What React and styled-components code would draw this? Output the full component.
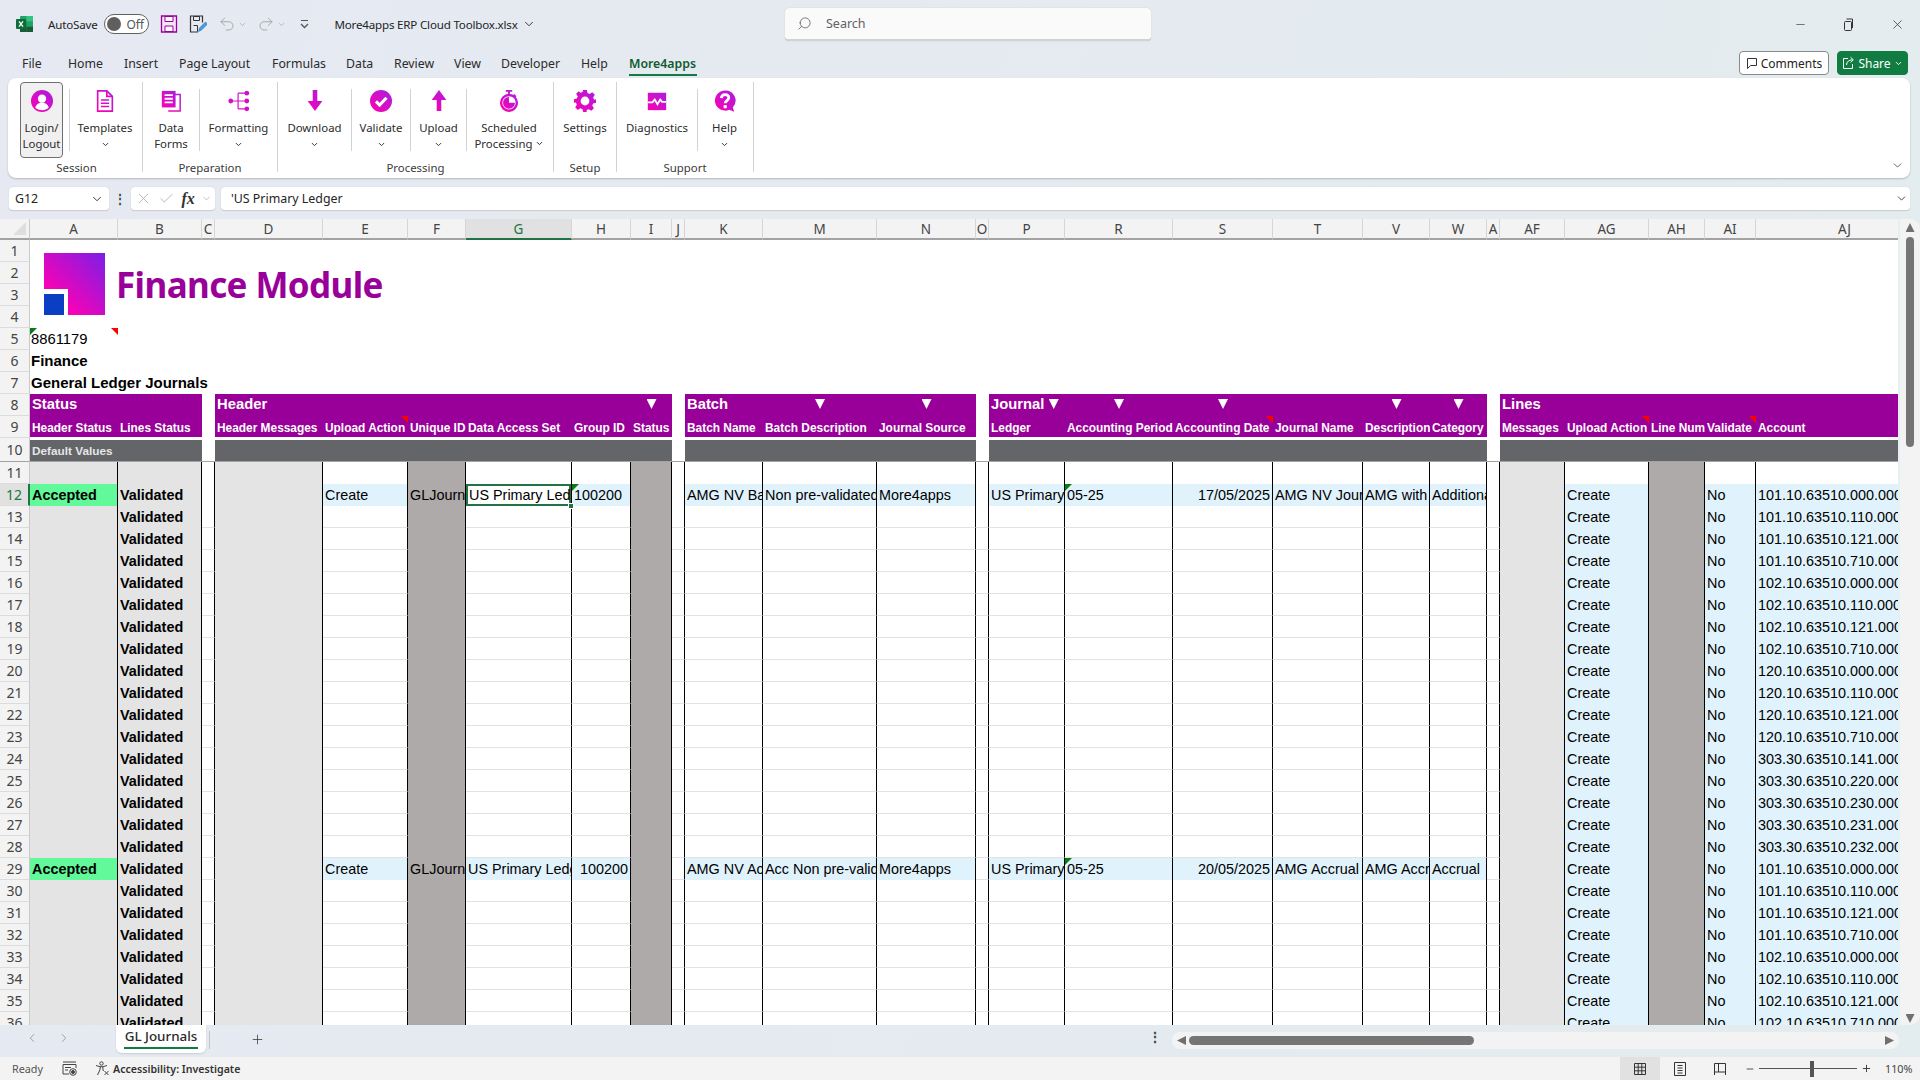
import React from "react";
import styled, { createGlobalStyle } from "styled-components";
import { ChevronDown, ChevronLeft, ChevronRight, Minus, Plus, Search, Undo2, Redo2, X, Check } from "lucide-react";

const UI_FONT = '"Noto Sans", "Open Sans", sans-serif';
const SHEET_FONT = '"Liberation Sans", Arial, sans-serif';

const columns = [
  { name: "A", w: 88, fill: "grey" },
  { name: "B", w: 84, fill: "grey" },
  { name: "C", w: 13, gap: true },
  { name: "D", w: 108, fill: "grey" },
  { name: "E", w: 85 },
  { name: "F", w: 58, fill: "dark" },
  { name: "G", w: 106 },
  { name: "H", w: 59 },
  { name: "I", w: 41, fill: "dark" },
  { name: "J", w: 13, gap: true },
  { name: "K", w: 78 },
  { name: "M", w: 114 },
  { name: "N", w: 99 },
  { name: "O", w: 13, gap: true },
  { name: "P", w: 76 },
  { name: "R", w: 108 },
  { name: "S", w: 100 },
  { name: "T", w: 90 },
  { name: "V", w: 67 },
  { name: "W", w: 57 },
  { name: "AE", label: "A", w: 13, gap: true },
  { name: "AF", w: 65, fill: "grey" },
  { name: "AG", w: 84, lines: true },
  { name: "AH", w: 56, fill: "dark" },
  { name: "AI", w: 51, lines: true },
  { name: "AJ", w: 178, lines: true },
];

const groupTitles = { A: "Status", D: "Header", K: "Batch", P: "Journal", AF: "Lines" };
const filterColumns = ["I", "M", "N", "P", "R", "S", "V", "W"];
const subHeads = {
  A: "Header Status",
  B: "Lines Status",
  D: "Header Messages",
  E: "Upload Action",
  F: "Unique ID",
  G: "Data Access Set",
  H: "Group ID",
  I: "Status",
  K: "Batch Name",
  M: "Batch Description",
  N: "Journal Source",
  P: "Ledger",
  R: "Accounting Period",
  S: "Accounting Date",
  T: "Journal Name",
  V: "Description",
  W: "Category",
  AF: "Messages",
  AG: "Upload Action",
  AH: "Line Num",
  AI: "Validate",
  AJ: "Account",
};
const redMarks = ["E", "S", "AG", "AI"];

const journalRows = {
  12: {
    A: "Accepted",
    E: "Create",
    F: "GLJournal",
    G: "US Primary Ledger",
    H: "100200",
    K: "AMG NV Batch",
    M: "Non pre-validated",
    N: "More4apps",
    P: "US Primary Ledger",
    R: "05-25",
    S: "17/05/2025",
    T: "AMG NV Journal",
    V: "AMG with",
    W: "Additional",
  },
  29: {
    A: "Accepted",
    E: "Create",
    F: "GLJournal",
    G: "US Primary Ledger",
    H: "100200",
    K: "AMG NV Accrual",
    M: "Acc Non pre-validated",
    N: "More4apps",
    P: "US Primary Ledger",
    R: "05-25",
    S: "20/05/2025",
    T: "AMG Accrual",
    V: "AMG Accrual",
    W: "Accrual",
  },
};

const accounts = [
  "101.10.63510.000", "101.10.63510.110", "101.10.63510.121", "101.10.63510.710",
  "102.10.63510.000", "102.10.63510.110", "102.10.63510.121", "102.10.63510.710",
  "120.10.63510.000", "120.10.63510.110", "120.10.63510.121", "120.10.63510.710",
  "303.30.63510.141", "303.30.63510.220", "303.30.63510.230", "303.30.63510.231", "303.30.63510.232",
  "101.10.63510.000", "101.10.63510.110", "101.10.63510.121", "101.10.63510.710",
  "102.10.63510.000", "102.10.63510.110", "102.10.63510.121", "102.10.63510.710",
];

const menuTabs = [
  ["File", 46], ["Home", 56], ["Insert", 55], ["Page Layout", 93], ["Formulas", 74], ["Data", 48],
  ["Review", 60], ["View", 47], ["Developer", 80], ["Help", 48], ["More4apps", 68],
];

const GlobalStyle = createGlobalStyle`
  html, body {
    margin: 0;
    width: 1920px;
    height: 1080px;
    overflow: hidden;
    font-family: ${UI_FONT};
    color: #242424;
  }
  * { box-sizing: border-box; }
`;

const Page = styled.div`
  width: 1920px;
  height: 1080px;
  display: flex;
  flex-direction: column;
  background: linear-gradient(100deg, #e6e9f2 0%, #e3ecef 100%);
`;

const TitleBar = styled.div`
  height: 48px;
  display: flex;
  align-items: center;
  padding-left: 16px;
  flex: none;
`;

const AutoSaveLabel = styled.span`
  margin-left: 14px;
  font-size: 11.6px;
  letter-spacing: -0.2px;
`;

const Toggle = styled.div`
  margin-left: 7px;
  width: 45px;
  height: 20px;
  border: 1px solid #616161;
  border-radius: 10px;
  background: #fff;
  display: flex;
  align-items: center;
  gap: 5px;
  padding-left: 2px;
  font-size: 12px;
  color: #555;
  &::before {
    content: "";
    width: 14px;
    height: 14px;
    border-radius: 50%;
    background: #5f5f5f;
  }
`;

const QuickIcon = styled.span`
  margin-left: ${(p) => p.$gap}px;
  display: flex;
  color: ${(p) => p.$color || "#a7a7a7"};
`;

const FileName = styled.span`
  margin-left: 24px;
  font-size: 11.6px;
  letter-spacing: -0.2px;
  display: flex;
  align-items: center;
  gap: 4px;
  white-space: nowrap;
`;

const SearchBox = styled.div`
  position: absolute;
  left: 785px;
  top: 8px;
  width: 366px;
  height: 33px;
  background: #fafafa;
  border-radius: 4px;
  border-bottom: 2px solid #d3d3d3;
  box-shadow: 0 0 1px rgba(0, 0, 0, 0.25);
  display: flex;
  align-items: center;
  gap: 14px;
  padding-left: 12px;
  font-size: 12.5px;
  color: #616161;
`;

const WindowControls = styled.div`
  margin-left: auto;
  display: flex;
  align-items: center;
  padding-right: 15px;
  gap: 36px;
  color: #333;
`;

const MenuRow = styled.div`
  height: 30px;
  display: flex;
  align-items: center;
  padding-left: 22px;
  padding-right: 12px;
  flex: none;
`;

const MenuTab = styled.div`
  width: ${(p) => p.$w}px;
  height: 26px;
  flex: none;
  line-height: 28px;
  font-size: 12.3px;
  white-space: nowrap;
  font-weight: ${(p) => (p.$active ? 600 : 400)};
  color: ${(p) => (p.$active ? "#0f5c31" : "#2b2b2b")};
  position: relative;
  &::after {
    content: "";
    display: ${(p) => (p.$active ? "block" : "none")};
    position: absolute;
    left: 0;
    right: 0;
    bottom: 0;
    height: 2px;
    background: #107c41;
  }
`;

const MenuActions = styled.div`
  margin-left: auto;
  display: flex;
  gap: 8px;
`;

const CommentsButton = styled.div`
  width: 90px;
  height: 24px;
  display: flex;
  align-items: center;
  justify-content: center;
  gap: 3px;
  background: #fff;
  border: 1px solid #8a8a8a;
  border-radius: 4px;
  font-size: 12px;
`;

const ShareButton = styled(CommentsButton)`
  width: 71px;
  background: #107c41;
  border-color: #107c41;
  color: #fff;
`;

const Ribbon = styled.div`
  flex: none;
  margin: 0 10px 0 8px;
  height: 100px;
  background: #fff;
  border-radius: 8px;
  box-shadow: 0 1px 2px rgba(0, 0, 0, 0.22);
  display: flex;
  padding-top: 4px;
`;

const RibbonGroup = styled.div`
  width: ${(p) => p.$w}px;
  height: 90px;
  padding-left: ${(p) => p.$pad || 0}px;
  border-right: 1px solid #d2d2d2;
  display: flex;
  flex-direction: column;
  flex: none;
`;

const GroupButtons = styled.div`
  height: 76px;
  display: flex;
  flex: none;
`;

const GroupLabel = styled.div`
  height: 20px;
  line-height: 20px;
  margin-left: ${(p) => (p.$pad ? -p.$pad : 0)}px;
  text-align: center;
  font-size: 11.4px;
  color: #3a3a3a;
`;

const RibbonButton = styled.div`
  width: ${(p) => p.$w}px;
  height: 76px;
  flex: none;
  display: flex;
  flex-direction: column;
  align-items: center;
  padding-top: ${(p) => (p.$active ? 6 : 7)}px;
  font-size: 11.4px;
  line-height: 16px;
  text-align: center;
  color: #2b2b2b;
  white-space: nowrap;
  border: ${(p) => (p.$active ? "1px solid #6f6f6f" : "none")};
  border-radius: 4px;
  background: ${(p) => (p.$active ? "#f0f0f0" : "transparent")};
`;

const ButtonIcon = styled.span`
  width: 24px;
  height: 24px;
  display: flex;
  align-items: center;
  justify-content: center;
  margin-bottom: 7px;
  flex: none;
`;

const ButtonSep = styled.span`
  width: 1px;
  height: 62px;
  margin: 7px 0 0 ${(p) => p.$gap || 0}px;
  background: #d2d2d2;
  flex: none;
`;

const DropMark = styled(ChevronDown)`
  width: 9px;
  height: 9px;
  stroke-width: 2.5;
  display: ${(p) => (p.$inline ? "inline" : "block")};
  margin: ${(p) => (p.$inline ? "0 0 0 2px" : "4px auto 0")};
`;

const RibbonCollapse = styled.span`
  margin: auto 6px 6px auto;
  display: flex;
  color: #444;
`;

const FormulaBar = styled.div`
  flex: none;
  margin: 9px 10px 8px 9px;
  height: 24px;
  display: flex;
  align-items: center;
  font-size: 12.4px;
`;

const NameBox = styled.div`
  width: 100px;
  height: 24px;
  background: #fff;
  border-radius: 4px;
  border-bottom: 1px solid #cfcfcf;
  box-shadow: 0 0 1px rgba(0, 0, 0, 0.2);
  display: flex;
  align-items: center;
  justify-content: space-between;
  padding: 0 5px 0 6px;
`;

const BarDots = styled.span`
  width: 22px;
  text-align: center;
  font-weight: 700;
  line-height: 1;
  color: #444;
`;

const FxBox = styled(NameBox)`
  width: 84px;
  padding: 0 3px 0 4px;
  color: #a8a8a8;
`;

const FxMark = styled.span`
  font-family: "Liberation Serif", serif;
  font-style: italic;
  font-weight: 700;
  font-size: 16px;
  color: #333;
`;

const FormulaInput = styled(NameBox)`
  flex: 1;
  margin-left: 6px;
  padding: 0 2px 0 10px;
`;

const SheetArea = styled.div`
  flex: 1;
  min-height: 0;
  display: flex;
`;

const GridViewport = styled.div`
  width: 1898px;
  height: 806px;
  overflow: hidden;
  background: #fff;
`;

const SheetGrid = styled.div`
  display: grid;
  grid-template-columns: 30px ${columns.map((c) => `${c.w}px`).join(" ")};
  grid-template-rows: 21px repeat(9, 22px) 24px repeat(26, 22px);
  font-family: ${SHEET_FONT};
  font-size: 14.4px;
  color: #000;
`;

const Corner = styled.div`
  background: #f3f3f3;
  border-right: 1px solid #c9c9c9;
  border-bottom: 2px solid #a3a3a3;
  position: relative;
  &::after {
    content: "";
    position: absolute;
    right: 3px;
    bottom: 3px;
    width: 13px;
    height: 13px;
    background: #dedede;
    clip-path: polygon(100% 0, 100% 100%, 0 100%);
  }
`;

const ColumnHead = styled.div`
  background: ${(p) => (p.$selected ? "#e1e1e1" : "#f3f3f3")};
  border-right: 1px solid #d6d6d6;
  border-bottom: 2px solid ${(p) => (p.$selected ? "#217346" : "#a3a3a3")};
  color: ${(p) => (p.$selected ? "#217346" : "#444")};
  font-family: ${UI_FONT};
  font-size: 13.5px;
  line-height: 21px;
  text-align: center;
  overflow: hidden;
`;

const RowHead = styled.div`
  background: ${(p) => (p.$selected ? "#e1e1e1" : "#f3f3f3")};
  border-right: ${(p) => (p.$selected ? "2px solid #217346" : "1px solid #c9c9c9")};
  border-bottom: ${(p) => (p.$freeze ? "1px solid #a3a3a3" : "1px solid #dcdcdc")};
  color: ${(p) => (p.$selected ? "#217346" : "#444")};
  font-family: ${UI_FONT};
  font-size: 14px;
  padding-bottom: 1px;
  display: flex;
  align-items: center;
  justify-content: center;
`;

const Banner = styled.div`
  grid-column: 2 / -1;
  grid-row: span 4;
  display: flex;
  align-items: center;
  padding-left: 14px;
  gap: 11px;
`;

const BannerTitle = styled.span`
  font-family: "Noto Sans", sans-serif;
  font-weight: 700;
  font-size: 35px;
  letter-spacing: -0.6px;
  color: #990099;
  white-space: nowrap;
`;

const MetaCell = styled.div`
  grid-column: ${(p) => (p.$wide ? "2 / -1" : "auto")};
  position: relative;
  display: flex;
  align-items: flex-end;
  padding: 0 2px 3px 1px;
  font-size: ${(p) => (p.$bold ? 15 : 14.8)}px;
  font-weight: ${(p) => (p.$bold ? 700 : 400)};
  white-space: nowrap;
`;

const MetaRest = styled.div`
  grid-column: 3 / -1;
`;

const GroupHead = styled.div`
  background: ${(p) => (p.$gap ? "#fff" : "#990099")};
  color: #fff;
  font-weight: 700;
  font-size: 14.8px;
  display: flex;
  align-items: center;
  padding: 0 2px 2px;
  white-space: nowrap;
`;

const FilterMark = styled.span`
  width: 10px;
  height: 10px;
  margin: 0 auto;
  background: #fff;
  clip-path: polygon(0 0, 100% 0, 50% 100%);
  flex: none;
`;

const SubHead = styled.div`
  position: relative;
  background: ${(p) => (p.$gap ? "#fff" : "#990099")};
  border-bottom: 1px solid #fff;
  color: #fff;
  font-weight: 700;
  font-size: 11.9px;
  display: flex;
  align-items: center;
  padding: 2px 2px 0;
  white-space: nowrap;
`;

const DefaultCell = styled.div`
  border-top: 2px solid #fff;
  border-bottom: 1px solid #a3a3a3;
  background: ${(p) => (p.$gap ? "#fff" : "#636569")};
  color: #e6e6e6;
  font-weight: 700;
  font-size: 11.8px;
  display: flex;
  align-items: center;
  padding: 0 2px;
  white-space: nowrap;
`;

const fills = {
  grey: "#e4e4e4",
  dark: "#aeaaaa",
  blue: "#e0f3fd",
  green: "#61f99a",
  white: "#fff",
};

const Cell = styled.div`
  position: relative;
  min-width: 0;
  background: ${(p) => fills[p.$fill]};
  border-right: 1px solid #000;
  border-bottom: ${(p) => (p.$ruled ? "1px solid #e2e2e2" : "none")};
  box-shadow: ${(p) => (p.$selected ? "inset 0 0 0 2px #217346" : "none")};
  z-index: ${(p) => (p.$selected ? 2 : "auto")};
`;

const CellText = styled.div`
  height: 100%;
  overflow: hidden;
  white-space: nowrap;
  padding: 2px 2px 0 ${(p) => (p.$selected ? 3 : 2)}px;
  line-height: 18px;
  font-weight: ${(p) => (p.$bold ? 700 : 400)};
  text-align: ${(p) => (p.$right ? "right" : "left")};
`;

const FillHandle = styled.span`
  position: absolute;
  right: -3px;
  bottom: -3px;
  width: 6px;
  height: 6px;
  background: #217346;
  border: 1px solid #fff;
`;

const CornerMark = styled.span`
  position: absolute;
  top: 0;
  ${(p) => (p.$side === "right" ? "right: 0;" : "left: 0;")}
  width: 7px;
  height: 7px;
  z-index: 3;
  background: ${(p) => (p.$side === "right" ? "#ff0000" : "#0b7a12")};
  clip-path: ${(p) =>
    p.$side === "right"
      ? "polygon(0 0, 100% 0, 100% 100%)"
      : "polygon(0 0, 100% 0, 0 100%)"};
`;

const VerticalScroll = styled.div`
  width: 22px;
  height: 806px;
  background: #f3f3f3;
  border-left: 2px solid #e4f0f2;
  border-radius: 0 10px 10px 0;
  display: flex;
  flex-direction: column;
  align-items: center;
  padding: 4px 0 2px;
`;

const ScrollArrow = styled.span`
  width: 9px;
  height: 9px;
  flex: none;
  background: #707070;
  clip-path: ${(p) =>
    ({
      up: "polygon(50% 0, 100% 100%, 0 100%)",
      down: "polygon(0 0, 100% 0, 50% 100%)",
      left: "polygon(100% 0, 100% 100%, 0 50%)",
      right: "polygon(0 0, 100% 50%, 0 100%)",
    })[p.$dir]};
`;

const VerticalThumb = styled.span`
  width: 8px;
  height: 210px;
  margin-top: 5px;
  margin-bottom: auto;
  border-radius: 4px;
  background: #757575;
`;

const TabBar = styled.div`
  flex: none;
  height: 32px;
  display: flex;
  align-items: flex-start;
  color: #8a8a8a;
`;

const TabNav = styled.span`
  margin: 6px 0 0 ${(p) => p.$gap}px;
  display: flex;
`;

const SheetTab = styled.div`
  margin-left: 45px;
  width: 90px;
  height: 28px;
  background: #fff;
  border-radius: 0 0 6px 6px;
  box-shadow: 0 1px 2px rgba(0, 0, 0, 0.12);
  font-size: 13.4px;
  font-weight: 500;
  color: #2b2b2b;
  text-align: center;
  line-height: 22px;
  position: relative;
  white-space: nowrap;
  &::after {
    content: "";
    position: absolute;
    left: 8px;
    right: 8px;
    bottom: 4px;
    height: 2px;
    background: #107c41;
  }
`;

const TabSep = styled.span`
  width: 1px;
  height: 18px;
  margin: 6px 0 0 3px;
  background: #c4c4c4;
`;

const AddSheet = styled.span`
  margin: 7px 0 0 40px;
  display: flex;
  color: #333;
`;

const TabDots = styled.span`
  margin: 5px 0 0 882px;
  width: 16px;
  font-weight: 700;
  font-size: 14px;
  color: #444;
  text-align: center;
  line-height: 1;
`;

const HorizontalScroll = styled.div`
  margin: 7px 0 0 9px;
  width: 727px;
  height: 17px;
  background: #f3f3f3;
  border-radius: 8px;
  display: flex;
  align-items: center;
  padding: 0 5px;
`;

const HorizontalThumb = styled.span`
  width: 285px;
  height: 9px;
  margin-left: 3px;
  margin-right: auto;
  border-radius: 5px;
  background: #757575;
`;

const StatusBar = styled.div`
  flex: none;
  height: 23px;
  background: #f3f3f3;
  display: flex;
  align-items: center;
  padding-left: 12px;
  font-size: 10.8px;
  color: #555;
`;

const AccessibilityText = styled.span`
  margin-left: 3px;
  font-size: 10.6px;
  font-weight: 600;
  color: #333;
`;

const StatusIcon = styled.span`
  margin-left: ${(p) => p.$gap}px;
  display: flex;
  color: #444;
`;

const ViewButtons = styled.div`
  margin-left: auto;
  display: flex;
  align-items: center;
  color: #333;
`;

const ViewButton = styled.span`
  width: ${(p) => p.$w || 40}px;
  height: 23px;
  display: flex;
  align-items: center;
  justify-content: center;
  background: ${(p) => (p.$active ? "#e1e1e1" : "transparent")};
`;

const ZoomSlider = styled.span`
  width: 98px;
  height: 1px;
  background: #555;
  display: flex;
  justify-content: center;
  align-items: center;
  padding-left: 7px;
  &::after {
    content: "";
    width: 4px;
    height: 16px;
    background: #555;
    flex: none;
  }
`;

const ZoomLabel = styled.span`
  margin-left: 9px;
  width: 35px;
  color: #444;
`;

// gradient icon wrapper for the More4apps ribbon glyphs
function GlyphIcon({ id, children, size = 22 }) {
  return (
    <svg width={size} height={size} viewBox="0 0 24 24">
      <defs>
        <linearGradient id={id} x1="0" y1="1" x2="1" y2="0">
          <stop offset="0" stopColor="#ff00b0" />
          <stop offset="1" stopColor="#a81ee0" />
        </linearGradient>
      </defs>
      {children(`url(#${id})`)}
    </svg>
  );
}

const icons = {
  login: (
    <GlyphIcon id="g-login">
      {(f) => (
        <>
          <circle cx="12" cy="12" r="12" fill={f} />
          <circle cx="12" cy="9.500" r="4.500" fill="#fff" />
          <path d="M4.600 19c1.200-3.500 4-5 7.400-5s6.200 1.500 7.400 5c-1.900 2-4.500 3-7.400 3s-5.500-1-7.400-3z" fill="#fff" />
        </>
      )}
    </GlyphIcon>
  ),
  templates: (
    <GlyphIcon id="g-tpl">
      {(f) => (
        <>
          <path d="M4 1h10l6 6v16H4z" fill="none" stroke={f} strokeWidth="1.800" />
          <path d="M14 1v6h6" fill="none" stroke={f} strokeWidth="1.800" />
          <path d="M7.500 11h9M7.500 14.500h9M7.500 18h9" stroke={f} strokeWidth="1.600" />
        </>
      )}
    </GlyphIcon>
  ),
  forms: (
    <GlyphIcon id="g-forms">
      {(f) => (
        <>
          <path d="M9 5h13v18H9" fill="none" stroke={f} strokeWidth="1.600" />
          <rect x="2" y="1" width="15" height="18" fill={f} />
          <path d="M5 5.500h9M5 9.500h9M5 13.500h9" stroke="#fff" strokeWidth="2" />
        </>
      )}
    </GlyphIcon>
  ),
  formatting: (
    <GlyphIcon id="g-format">
      {(f) => (
        <>
          <path d="M3 12h18M11 3.500v17M11 3.500h10M11 20.500h10" fill="none" stroke={f} strokeWidth="1.300" />
          <circle cx="3" cy="12" r="2.600" fill={f} />
          <circle cx="20.500" cy="3.500" r="2.600" fill={f} />
          <circle cx="20.500" cy="12" r="2.600" fill={f} />
          <circle cx="20.500" cy="20.500" r="2.600" fill={f} />
        </>
      )}
    </GlyphIcon>
  ),
  download: (
    <GlyphIcon id="g-down">
      {(f) => <path d="M9.500 0h5v12h5.500L12 23 4 12h5.500z" fill={f} />}
    </GlyphIcon>
  ),
  validate: (
    <GlyphIcon id="g-valid">
      {(f) => (
        <>
          <circle cx="12" cy="12" r="12" fill={f} />
          <path d="M6.500 12.500l4 4 7.500-8" fill="none" stroke="#fff" strokeWidth="3.400" />
        </>
      )}
    </GlyphIcon>
  ),
  upload: (
    <GlyphIcon id="g-up">
      {(f) => <path d="M12 0l8 11h-5.500v12h-5V11H4z" fill={f} />}
    </GlyphIcon>
  ),
  scheduled: (
    <GlyphIcon id="g-sched">
      {(f) => (
        <>
          <path d="M8.500 1h7M12 1v4M17 5l2.500 2.500" fill="none" stroke={f} strokeWidth="2" />
          <circle cx="12" cy="14" r="8.600" fill="none" stroke={f} strokeWidth="2.600" />
          <path d="M12 14V7.500A6.500 6.500 0 1 0 18.500 14z" fill={f} />
        </>
      )}
    </GlyphIcon>
  ),
  settings: (
    <GlyphIcon id="g-gear">
      {(f) => (
        <>
          <path
            d="M10 0h4l.7 3.300 2.300 1 2.900-1.800 2.800 2.800-1.800 2.900 1 2.300L24 10v4l-3.100.7-1 2.300 1.800 2.900-2.800 2.800-2.900-1.800-2.300 1L14 24h-4l-.7-3.100-2.300-1-2.900 1.800-2.800-2.800 1.800-2.900-1-2.300L0 14v-4l3.100-.7 1-2.300-1.800-2.900 2.800-2.800L7 3.100l2.300-1z"
            fill={f}
          />
          <circle cx="12" cy="12" r="4.800" fill="#fff" />
        </>
      )}
    </GlyphIcon>
  ),
  diagnostics: (
    <GlyphIcon id="g-diag">
      {(f) => (
        <>
          <rect x="2" y="3" width="20" height="19" fill={f} />
          <path d="M2 13.500h5l2.500-3 3 5 3-5 2 2.500H22" fill="none" stroke="#fff" strokeWidth="2" />
        </>
      )}
    </GlyphIcon>
  ),
  help: (
    <GlyphIcon id="g-help">
      {(f) => (
        <>
          <path d="M12 .5a11 11 0 1 0 4.600 21l5.400 2.300-1.500-4.800A11 11 0 0 0 12 .5z" fill={f} />
          <path d="M8 8.800c.2-2.500 1.900-3.800 4.100-3.800 2.300 0 4 1.400 4 3.500 0 3-3.900 3-3.900 6" fill="none" stroke="#fff" strokeWidth="3" />
          <rect x="10.500" y="16.500" width="3.400" height="3.400" fill="#fff" />
        </>
      )}
    </GlyphIcon>
  ),
};

function ExcelLogo() {
  return (
    <svg width="18" height="18" viewBox="0 0 18 18">
      <rect x="4" y="1" width="13" height="16" rx="1" fill="#21a366" />
      <rect x="10.500" y="1" width="6.500" height="5.300" fill="#33c481" />
      <rect x="4" y="6.300" width="6.500" height="5.300" fill="#107c41" />
      <rect x="10.500" y="11.700" width="6.500" height="5.300" fill="#185c37" />
      <rect x="4" y="11.700" width="6.500" height="5.300" fill="#185c37" />
      <rect x="0" y="4" width="10" height="10" rx="1" fill="#0f6b3a" />
      <path d="M3 6.300l4 5.400M7 6.300l-4 5.400" stroke="#fff" strokeWidth="1.300" />
    </svg>
  );
}

function SaveIcon() {
  return (
    <svg width="18" height="18" viewBox="0 0 18 18" fill="none">
      <path d="M1.500 1h15v16h-15z" fill="#f6e3f6" stroke="#990099" strokeWidth="1.300" />
      <path d="M5 1.500h8v5H5zM5 11h8v5.500H5z" fill="#fff" stroke="#990099" />
    </svg>
  );
}

function SaveAsIcon() {
  return (
    <svg width="18" height="18" viewBox="0 0 18 18" fill="none">
      <path d="M9 17H1.500V1h12v6.500" stroke="#333" strokeWidth="1.200" />
      <path d="M4.500 1.500h6v4h-6zM4.500 10.500h4v6" stroke="#333" />
      <path d="M9.500 16.500l1-3.500 6-6 2 2-6 6z" fill="#4a9be0" stroke="#1f6fb5" strokeWidth=".6" />
    </svg>
  );
}

function CustomizeIcon() {
  return (
    <svg width="11" height="10" viewBox="0 0 11 10" fill="none" stroke="#555">
      <path d="M2 1.500h7" />
      <path d="M2 5l3.500 3.500L9 5" strokeWidth="1.300" />
    </svg>
  );
}

function RestoreIcon() {
  return (
    <svg width="11" height="13" viewBox="0 0 11 13" fill="none" stroke="#333">
      <rect x="1.500" y="3.500" width="7" height="9" rx="1" />
      <path d="M3.500 1h6v9" />
    </svg>
  );
}

function CommentIcon({ color = "#333" }) {
  return (
    <svg width="12" height="13" viewBox="0 0 12 13" fill="none" stroke={color}>
      <path d="M1.500 1.500h9v7h-6l-3 3z" />
    </svg>
  );
}

function ShareIcon() {
  return (
    <svg width="13" height="14" viewBox="0 0 13 14" fill="none" stroke="#fff">
      <path d="M6 2.500H1.500v10h9V8" />
      <path d="M4.500 9c.3-3.500 2.500-5.200 6-5.200M8.500 1.200l2.800 2.600-2.800 2.600" />
    </svg>
  );
}

function MacroIcon() {
  return (
    <svg width="15" height="15" viewBox="0 0 15 15" fill="none" stroke="#444">
      <path d="M1 1h13M1 3.500h13M1 3.500V13h6M14 3.500V7" />
      <path d="M3 6.500h6M3 9h3" />
      <circle cx="11" cy="11" r="3.300" />
      <circle cx="11" cy="11" r="1.500" fill="#444" />
    </svg>
  );
}

function AccessibilityIcon() {
  return (
    <svg width="15" height="15" viewBox="0 0 15 15" fill="none" stroke="#444">
      <circle cx="6.500" cy="2.500" r="1.700" />
      <path d="M1 4.500l4 1.200h3L12 4.500M5.300 6l-.4 3-2.400 5M7.700 6l.4 3 .4 1" />
      <path d="M9.500 10l4 4M13.500 10l-4 4" />
    </svg>
  );
}

function NormalViewIcon() {
  return (
    <svg width="14" height="14" viewBox="0 0 14 14" fill="none" stroke="#333">
      <path d="M1.500 1.500h11v11h-11zM1.500 5.200h11M1.500 8.800h11M5.200 1.500v11M8.800 1.500v11" />
    </svg>
  );
}

function PageViewIcon() {
  return (
    <svg width="12" height="14" viewBox="0 0 12 14" fill="none" stroke="#333">
      <path d="M.5.500h11v13H.5z" />
      <path d="M3.500 3.500h5M3.500 6h5M3.500 8.500h5M3.500 11h5" />
    </svg>
  );
}

function BreakViewIcon() {
  return (
    <svg width="14" height="14" viewBox="0 0 14 14" fill="none" stroke="#333">
      <path d="M1.500 13V1.500h11V13M1.500 10h4V1.500M12.500 10h-7" />
    </svg>
  );
}

function LogoMark() {
  return (
    <svg width="61" height="62" viewBox="0 0 61 62">
      <defs>
        <linearGradient id="finance-logo" x1="0" y1="1" x2="1" y2="0">
          <stop offset=".2" stopColor="#ff00b4" />
          <stop offset="1" stopColor="#7b1fe6" />
        </linearGradient>
      </defs>
      <path d="M0 0h61v62H24V36H0z" fill="url(#finance-logo)" />
      <rect x="0" y="41" width="20" height="21" fill="#0a3fc4" />
    </svg>
  );
}

function cellFill(col, row) {
  if (col.name === "A" && journalRows[row]) return "green";
  if (col.fill) return col.fill;
  if (col.gap) return "white";
  if (col.lines && row >= 12) return "blue";
  if (journalRows[row]) return "blue";
  return "white";
}

function cellText(col, row) {
  if (col.name === "B" && row >= 12) return "Validated";
  if (row >= 12) {
    if (col.name === "AG") return "Create";
    if (col.name === "AI") return "No";
    if (col.name === "AJ") return `${accounts[row - 12]}.000.000`;
  }
  return journalRows[row]?.[col.name] || "";
}

function DataCell({ col, row }) {
  const selected = row === 12 && col.name === "G";
  const fill = selected ? "white" : cellFill(col, row);
  const right = col.name === "S" || (col.name === "H" && row === 29);
  const tick = (col.name === "H" && row === 12) || (col.name === "R" && journalRows[row]);
  return (
    <Cell $fill={fill} $ruled={fill === "white" && row >= 13} $selected={selected}>
      <CellText $bold={col.name === "A" || col.name === "B"} $right={right} $selected={selected}>
        {cellText(col, row)}
      </CellText>
      {tick && <CornerMark $side="left" />}
      {selected && <FillHandle />}
    </Cell>
  );
}

function Sheet() {
  const dataRows = [];
  for (let row = 11; row <= 36; row += 1) dataRows.push(row);
  return (
    <SheetGrid>
      <Corner />
      {columns.map((c) => (
        <ColumnHead key={c.name} $selected={c.name === "G"}>
          {c.label || c.name}
        </ColumnHead>
      ))}

      <RowHead>1</RowHead>
      <Banner>
        <LogoMark />
        <BannerTitle>Finance Module</BannerTitle>
      </Banner>
      <RowHead>2</RowHead>
      <RowHead>3</RowHead>
      <RowHead>4</RowHead>

      <RowHead>5</RowHead>
      <MetaCell>
        <CornerMark $side="left" />
        8861179
        <CornerMark $side="right" />
      </MetaCell>
      <MetaRest />
      <RowHead>6</RowHead>
      <MetaCell $wide $bold>Finance</MetaCell>
      <RowHead>7</RowHead>
      <MetaCell $wide $bold>General Ledger Journals</MetaCell>

      <RowHead>8</RowHead>
      {columns.map((c) => (
        <GroupHead key={c.name} $gap={c.gap}>
          {groupTitles[c.name]}
          {filterColumns.includes(c.name) && <FilterMark />}
        </GroupHead>
      ))}

      <RowHead>9</RowHead>
      {columns.map((c) => (
        <SubHead key={c.name} $gap={c.gap}>
          {subHeads[c.name]}
          {redMarks.includes(c.name) && <CornerMark $side="right" />}
        </SubHead>
      ))}

      <RowHead $freeze>10</RowHead>
      {columns.map((c) => (
        <DefaultCell key={c.name} $gap={c.gap}>
          {c.name === "A" ? "Default Values" : ""}
        </DefaultCell>
      ))}

      {dataRows.map((row) => (
        <React.Fragment key={row}>
          <RowHead $selected={row === 12}>{row}</RowHead>
          {columns.map((c) => (
            <DataCell key={c.name} col={c} row={row} />
          ))}
        </React.Fragment>
      ))}
    </SheetGrid>
  );
}

export default function App() {
  return (
    <Page>
      <GlobalStyle />
      <TitleBar>
        <ExcelLogo />
        <AutoSaveLabel>AutoSave</AutoSaveLabel>
        <Toggle>Off</Toggle>
        <QuickIcon $gap={11}><SaveIcon /></QuickIcon>
        <QuickIcon $gap={11}><SaveAsIcon /></QuickIcon>
        <QuickIcon $gap={11}><Undo2 size={18} strokeWidth={1.3} /></QuickIcon>
        <QuickIcon $gap={2}><ChevronDown size={9} /></QuickIcon>
        <QuickIcon $gap={10}><Redo2 size={18} strokeWidth={1.3} /></QuickIcon>
        <QuickIcon $gap={2}><ChevronDown size={9} /></QuickIcon>
        <QuickIcon $gap={13}><CustomizeIcon /></QuickIcon>
        <FileName>
          More4apps ERP Cloud Toolbox.xlsx
          <ChevronDown size={14} strokeWidth={1.5} />
        </FileName>
        <SearchBox>
          <Search size={15} strokeWidth={1.3} style={{ transform: "scaleX(-1)" }} />
          Search
        </SearchBox>
        <WindowControls>
          <Minus size={13} strokeWidth={1.2} />
          <RestoreIcon />
          <X size={15} strokeWidth={1.2} />
        </WindowControls>
      </TitleBar>

      <MenuRow>
        {menuTabs.map(([label, w]) => (
          <MenuTab key={label} $w={w} $active={label === "More4apps"}>
            {label}
          </MenuTab>
        ))}
        <MenuActions>
          <CommentsButton><CommentIcon />Comments</CommentsButton>
          <ShareButton><ShareIcon />Share<ChevronDown size={9} strokeWidth={2.5} /></ShareButton>
        </MenuActions>
      </MenuRow>

      <Ribbon>
        <RibbonGroup $w={135} $pad={12}>
          <GroupButtons>
            <RibbonButton $w={43} $active>
              <ButtonIcon>{icons.login}</ButtonIcon>
              Login/
              <br />
              Logout
            </RibbonButton>
            <ButtonSep $gap={6} />
            <RibbonButton $w={70}>
              <ButtonIcon>{icons.templates}</ButtonIcon>
              Templates
              <DropMark />
            </RibbonButton>
          </GroupButtons>
          <GroupLabel $pad={9}>Session</GroupLabel>
        </RibbonGroup>

        <RibbonGroup $w={135}>
          <GroupButtons>
            <RibbonButton $w={56}>
              <ButtonIcon>{icons.forms}</ButtonIcon>
              Data
              <br />
              Forms
            </RibbonButton>
            <ButtonSep />
            <RibbonButton $w={77}>
              <ButtonIcon>{icons.formatting}</ButtonIcon>
              Formatting
              <DropMark />
            </RibbonButton>
          </GroupButtons>
          <GroupLabel>Preparation</GroupLabel>
        </RibbonGroup>

        <RibbonGroup $w={276}>
          <GroupButtons>
            <RibbonButton $w={73}>
              <ButtonIcon>{icons.download}</ButtonIcon>
              Download
              <DropMark />
            </RibbonButton>
            <ButtonSep />
            <RibbonButton $w={58}>
              <ButtonIcon>{icons.validate}</ButtonIcon>
              Validate
              <DropMark />
            </RibbonButton>
            <ButtonSep />
            <RibbonButton $w={55}>
              <ButtonIcon>{icons.upload}</ButtonIcon>
              Upload
              <DropMark />
            </RibbonButton>
            <ButtonSep />
            <RibbonButton $w={84}>
              <ButtonIcon>{icons.scheduled}</ButtonIcon>
              Scheduled
              <br />
              <span>
                Processing
                <DropMark $inline />
              </span>
            </RibbonButton>
          </GroupButtons>
          <GroupLabel>Processing</GroupLabel>
        </RibbonGroup>

        <RibbonGroup $w={63}>
          <GroupButtons>
            <RibbonButton $w={62}>
              <ButtonIcon>{icons.settings}</ButtonIcon>
              Settings
            </RibbonButton>
          </GroupButtons>
          <GroupLabel>Setup</GroupLabel>
        </RibbonGroup>

        <RibbonGroup $w={137}>
          <GroupButtons>
            <RibbonButton $w={80}>
              <ButtonIcon>{icons.diagnostics}</ButtonIcon>
              Diagnostics
            </RibbonButton>
            <ButtonSep />
            <RibbonButton $w={53}>
              <ButtonIcon>{icons.help}</ButtonIcon>
              Help
              <DropMark />
            </RibbonButton>
          </GroupButtons>
          <GroupLabel>Support</GroupLabel>
        </RibbonGroup>

        <RibbonCollapse>
          <ChevronDown size={13} strokeWidth={1.5} />
        </RibbonCollapse>
      </Ribbon>

      <FormulaBar>
        <NameBox>
          G12
          <ChevronDown size={14} strokeWidth={1.5} />
        </NameBox>
        <BarDots>⋮</BarDots>
        <FxBox>
          <X size={17} strokeWidth={1.1} />
          <Check size={17} strokeWidth={1.1} />
          <FxMark>fx</FxMark>
          <ChevronDown size={11} strokeWidth={1.5} />
        </FxBox>
        <FormulaInput>
          'US Primary Ledger
          <ChevronDown size={13} strokeWidth={1.5} />
        </FormulaInput>
      </FormulaBar>

      <SheetArea>
        <GridViewport>
          <Sheet />
        </GridViewport>
        <VerticalScroll>
          <ScrollArrow $dir="up" />
          <VerticalThumb />
          <ScrollArrow $dir="down" />
        </VerticalScroll>
      </SheetArea>

      <TabBar>
        <TabNav $gap={25}><ChevronLeft size={14} strokeWidth={1.3} /></TabNav>
        <TabNav $gap={18}><ChevronRight size={14} strokeWidth={1.3} /></TabNav>
        <SheetTab>GL Journals</SheetTab>
        <TabSep />
        <AddSheet><Plus size={15} strokeWidth={1.2} /></AddSheet>
        <TabDots>⋮</TabDots>
        <HorizontalScroll>
          <ScrollArrow $dir="left" />
          <HorizontalThumb />
          <ScrollArrow $dir="right" />
        </HorizontalScroll>
      </TabBar>

      <StatusBar>
        Ready
        <StatusIcon $gap={19}><MacroIcon /></StatusIcon>
        <StatusIcon $gap={18}><AccessibilityIcon /></StatusIcon>
        <AccessibilityText>Accessibility: Investigate</AccessibilityText>
        <ViewButtons>
          <ViewButton $active><NormalViewIcon /></ViewButton>
          <ViewButton><PageViewIcon /></ViewButton>
          <ViewButton><BreakViewIcon /></ViewButton>
          <ViewButton $w={19}><Minus size={10} /></ViewButton>
          <ZoomSlider />
          <ViewButton $w={19}><Plus size={11} /></ViewButton>
          <ZoomLabel>110%</ZoomLabel>
        </ViewButtons>
      </StatusBar>
    </Page>
  );
}
